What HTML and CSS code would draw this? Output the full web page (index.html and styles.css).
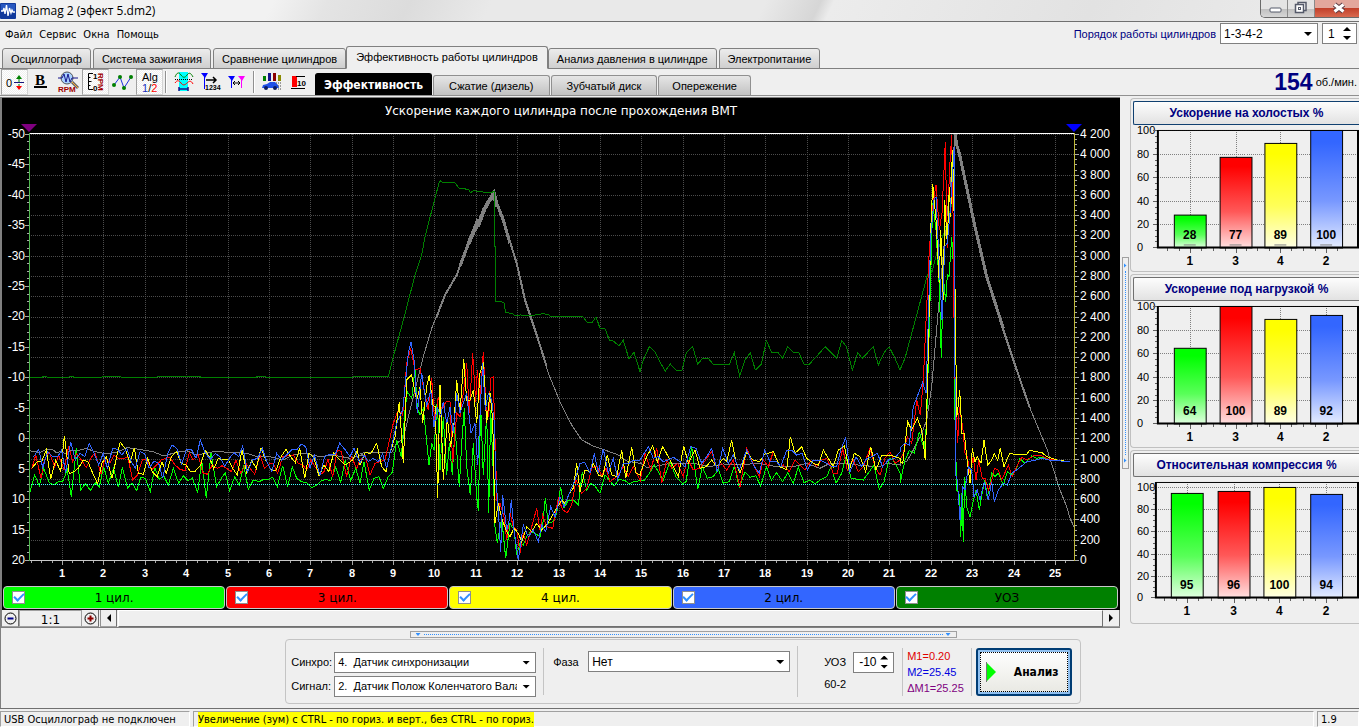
FILE: index.html
```html
<!DOCTYPE html>
<html lang="ru">
<head>
<meta charset="utf-8">
<title>Diamag 2</title>
<link rel="stylesheet" href="styles.css">
</head>
<body>
<header class="titlebar">
  <svg class="app-icon" viewBox="0 0 16 16" width="16" height="16"><rect width="16" height="16" rx="1" fill="#123a9c"/><rect x="1" y="1" width="14" height="7" fill="#2858c0"/><path d="M1 8h2l1-3 1 6 1.500-9 1.500 11 1.500-8 1.500 5 1-3 1 2h2" fill="none" stroke="#fff" stroke-width="1.300"/></svg>
  <h1 class="title">Diamag 2 (эфект 5.dm2)</h1>
  <div class="window-buttons">
    <button class="wbtn" aria-label="Свернуть"><svg viewBox="0 0 28 17" width="28" height="17"><rect x="9" y="8" width="11" height="4" rx="1" fill="#fff" stroke="#555a6a"/></svg></button>
    <button class="wbtn" aria-label="Развернуть"><svg viewBox="0 0 28 17" width="28" height="17"><path d="M10 5V2.500h8v8h-2.500" fill="#fff" stroke="#555a6a" stroke-width="1.500"/><rect x="7.500" y="4.500" width="8" height="8" fill="#fff" stroke="#555a6a" stroke-width="1.500"/><rect x="10.500" y="7.500" width="2" height="2" fill="none" stroke="#555a6a"/></svg></button>
    <button class="wbtn wbtn-close" aria-label="Закрыть"><svg viewBox="0 0 44 17" width="44" height="17"><path d="M19.500 4.500l9 7M28.500 4.500l-9 7" stroke="#5b3a42" stroke-width="5"/><path d="M19.500 4.500l9 7M28.500 4.500l-9 7" stroke="#fff" stroke-width="3"/></svg></button>
  </div>
</header>

<div class="top">
  <div class="top-left">
    <nav class="menu">
      <button>Файл</button><button>Сервис</button><button>Окна</button><button>Помощь</button>
    </nav>
    <nav class="tabs">
      <button class="tab">Осциллограф</button>
      <button class="tab">Система зажигания</button>
      <button class="tab">Сравнение цилиндров</button>
      <button class="tab tab-active">Эффективность работы цилиндров</button>
      <button class="tab">Анализ давления в цилиндре</button>
      <button class="tab">Электропитание</button>
    </nav>
  </div>
  <div class="order">
    <label for="order">Порядок работы цилиндров</label>
    <span class="select order-select"><select id="order"><option>1-3-4-2</option></select></span>
    <span class="spin order-spin"><input type="number" value="1" aria-label="Номер цилиндра"></span>
  </div>
</div>

<div class="toolbar">
  <button class="tool pressed" aria-label="Ноль"><svg viewBox="0 0 26 26" width="26" height="26"><text x="5" y="18" class="t11">0</text><path d="M13 13.500h10" stroke="#15157c"/><path d="M18 8v5M18 15v5" stroke="#008000"/><path d="M15 10l3-4 3 4z" fill="#008000"/><path d="M15 17l3 4 3-4z" fill="#f00"/></svg></button>
  <button class="tool" aria-label="Жирная линия"><svg viewBox="0 0 26 26" width="26" height="26"><text x="7" y="16" class="tb">B</text><path d="M6 18h13" stroke="#000" stroke-width="2"/></svg></button>
  <button class="tool" aria-label="Обороты"><svg viewBox="0 0 26 26" width="26" height="26"><circle cx="12" cy="9" r="6" fill="#a8d0ff" stroke="#555"/><path d="M3 9h4l2-4 2 8 2-8 2 8 2-4h6" fill="none" stroke="#15158c"/><path d="M17 13l6 6" stroke="#666" stroke-width="3"/><path d="M17 13l6 6" stroke="#ffa830"/><text x="3" y="23" class="t8 rpm">RPM</text></svg></button>
  <button class="tool pressed" aria-label="Шкала оборотов"><svg viewBox="0 0 26 26" width="26" height="26"><path d="M11 4.500H6.500v16H11" fill="none" stroke="#000"/><path d="M6.500 8.500h2M6.500 12.500h3M6.500 16.500h2" stroke="#000"/><text x="11" y="10" class="t8">1</text><text x="11" y="22" class="t8">0</text><text transform="translate(16 4) rotate(90)" class="t8 rpm">RPM</text></svg></button>
  <button class="tool" aria-label="Точки"><svg viewBox="0 0 26 26" width="26" height="26"><path d="M5 16l6-8 4 11 7-11" fill="none" stroke="#2030e0"/><g fill="#008000"><circle cx="5" cy="16" r="2"/><circle cx="11" cy="8" r="2"/><circle cx="15" cy="19" r="2"/><circle cx="22" cy="8" r="2"/></g></svg></button>
  <button class="tool pressed" aria-label="Алгоритм"><svg viewBox="0 0 26 26" width="26" height="26"><text x="6" y="12" class="t11">Alg</text><text x="6" y="23" class="t11"><tspan fill="#2030c0">1</tspan>/<tspan fill="#f00">2</tspan></text></svg></button>
  <span class="sep"></span>
  <button class="tool" aria-label="Диапазон"><svg viewBox="0 0 26 26" width="26" height="26"><rect x="9" y="3" width="9" height="19" fill="#0ff"/><path d="M5 8c2-5 4-5 6-2s4 3 6 0 4-2 6 2" fill="none" stroke="#008000"/><path d="M5 10.500h18" stroke="#000" stroke-dasharray="1 1"/><path d="M5 14c2-3 4-3 6 0s4 2 6 0 4-3 6 1" fill="none" stroke="#f00"/><path d="M9 20h9M9 18v4M18 18v4" stroke="#15158c" stroke-width="1.500"/></svg></button>
  <button class="tool" aria-label="Маркер счёта"><svg viewBox="0 0 26 26" width="26" height="26"><path d="M4 4h7l-3 5z" fill="#00f"/><path d="M7.500 5v15" stroke="#00f"/><path d="M9 11h10M16 8l3 3-3 3" fill="none" stroke="#000" stroke-width="1.500"/><text x="8" y="21" class="t7">1234</text></svg></button>
  <button class="tool" aria-label="Два маркера"><svg viewBox="0 0 26 26" width="26" height="26"><path d="M4 7h7l-3 5z" fill="#00f"/><path d="M7.500 8v11" stroke="#00f"/><path d="M14 7h7l-3 5z" fill="#f0f"/><path d="M17.500 8v11" stroke="#f0f"/><path d="M9 14h7M11 12l-2 2 2 2M14 12l2 2-2 2" fill="none" stroke="#000"/></svg></button>
  <span class="sep"></span>
  <button class="tool" aria-label="Автомобиль"><svg viewBox="0 0 26 26" width="26" height="26"><path d="M5 7h3v5H5z" fill="#008000"/><path d="M10 4h3v8h-3z" fill="#15158c"/><path d="M15 4h3v8h-3z" fill="#8b0000"/><path d="M20 6h3v6h-3z" fill="#8a8a00"/><path d="M4 19l1-3 4-1 3-2h5l3 3 1 3z" fill="#2050e8"/><circle cx="8" cy="19" r="2" fill="#0a1a60"/><circle cx="17" cy="19" r="2" fill="#0a1a60"/><path d="M18 14h6M20 17h4M20 20h4" stroke="#444" stroke-dasharray="1 1"/></svg></button>
  <button class="tool" aria-label="Порог 10"><svg viewBox="0 0 26 26" width="26" height="26"><path d="M7 7h5v11H7z" fill="#f00"/><path d="M11 7.500h9M6 19.500h14" stroke="#000"/><text x="12" y="17" class="t8">10</text></svg></button>
  <nav class="subtabs">
    <button class="subtab subtab-active">Эффективность</button>
    <button class="subtab">Сжатие (дизель)</button>
    <button class="subtab">Зубчатый диск</button>
    <button class="subtab">Опережение</button>
  </nav>
  <p class="rpm-readout"><strong>154</strong><span>об./мин.</span></p>
</div>

<main class="workspace">
  <section class="scope">
    <svg id="scope" class="scope-svg" viewBox="2 98 1118 487"></svg>
    <div class="legend">
      <label class="leg leg-green"><input type="checkbox" checked><span>1 цил.</span></label>
      <label class="leg leg-red"><input type="checkbox" checked><span>3 цил.</span></label>
      <label class="leg leg-yellow"><input type="checkbox" checked><span>4 цил.</span></label>
      <label class="leg leg-blue"><input type="checkbox" checked><span>2 цил.</span></label>
      <label class="leg leg-dark"><input type="checkbox" checked><span>УОЗ</span></label>
    </div>
    <div class="scrollrow">
      <button class="sbtn" aria-label="Уменьшить"><svg viewBox="0 0 13 13" width="13" height="13"><circle cx="6.500" cy="6.500" r="5.500" fill="none" stroke="#000"/><path d="M3.500 6.500h6" stroke="#00008b" stroke-width="2"/></svg></button>
      <output class="ratio">1:1</output>
      <button class="sbtn" aria-label="Увеличить"><svg viewBox="0 0 13 13" width="13" height="13"><circle cx="6.500" cy="6.500" r="5.500" fill="none" stroke="#000"/><path d="M3.500 6.500h6M6.500 3.500v6" stroke="#8b0000" stroke-width="2"/></svg></button>
      <button class="sbtn sleft" aria-label="Влево"><svg viewBox="0 0 6 8" width="6" height="8"><path d="M5 0v8L1 4z"/></svg></button>
      <div class="thumb"></div>
      <button class="sbtn" aria-label="Вправо"><svg viewBox="0 0 6 8" width="6" height="8"><path d="M1 0v8l4-4z"/></svg></button>
    </div>
  </section>
  <div class="vsplit"><button class="vgrip" aria-label="Свернуть панель"><i></i><b></b><i></i></button></div>
  <aside class="cards">
    <section class="card"><button class="card-head card-head-focus">Ускорение на холостых %</button><svg class="bars" viewBox="1132 125 227 145" data-left="1157" data-top="130" data-base="248" data-full="118" data-x="1173,1219,1264,1310" data-v="28,77,89,100" data-mark="1"></svg></section>
    <section class="card"><button class="card-head">Ускорение под нагрузкой %</button><svg class="bars" viewBox="1132 125 227 145" data-left="1157" data-top="130" data-base="248" data-full="118" data-x="1173,1219,1264,1310" data-v="64,100,89,92"></svg></section>
    <section class="card"><button class="card-head">Относительная компрессия %</button><svg class="bars" viewBox="1132 125 227 145" data-left="1155" data-top="130" data-base="246" data-full="111" data-x="1170,1217,1263,1310" data-v="95,96,100,94"></svg></section>
  </aside>
</main>

<section class="bottom">
  <button class="hgrip" aria-label="Свернуть настройки"><i></i><b></b><i></i></button>
  <div class="panel">
    <div class="pairs">
      <label for="sync">Синхро:</label>
      <span class="select"><select id="sync"><option>4.&nbsp; Датчик синхронизации</option></select></span>
      <label for="signal">Сигнал:</label>
      <span class="select"><select id="signal"><option>2.&nbsp; Датчик Полож Коленчатого Вала</option></select></span>
    </div>
    <div class="phase">
      <label for="phase">Фаза</label>
      <span class="select"><select id="phase"><option>Нет</option></select></span>
    </div>
    <div class="uoz">
      <label for="uoz">УОЗ</label>
      <span class="spin"><input id="uoz" type="number" value="-10"></span>
      <span>60-2</span>
    </div>
    <div class="marks">
      <span class="m1">М1=0.20</span><span class="m2">М2=25.45</span><span class="md">ΔМ1=25.25</span>
    </div>
    <button class="analyze"><svg viewBox="0 0 10 20" width="10" height="20"><path d="M0 0l10 10L0 20z" fill="#0f0"/><path d="M.500 0v20" stroke="#777"/></svg><span>Анализ</span></button>
  </div>
</section>

<footer class="status">
  <span class="st">USB Осциллограф не подключен</span>
  <span class="st st-main"><mark>Увеличение (зум) с CTRL - по гориз. и верт., без CTRL - по гориз.</mark></span>
  <span class="st">1.9</span>
</footer>
<script src="app.js"></script>
</body>
</html>
```
FILE: styles.css
```css
* { box-sizing: border-box; }
body {
  margin: 0;
  min-height: 100vh;
  display: flex;
  flex-direction: column;
  background: #efefef;
  color: #000;
  font: 11px/16px "Liberation Sans", Arial, sans-serif;
  overflow-x: hidden;
}
button, input, select { font: inherit; color: inherit; padding: 0; margin: 0; border: 0; background: none; border-radius: 0; }
h1, p { margin: 0; }
svg { display: block; }

.titlebar {
  height: 22px;
  display: flex;
  align-items: flex-start;
  border-bottom: 1px solid #707070;
  background: linear-gradient(115deg, #f2f2f2 0 20%, #e4e4e4 24%, #dcdcdc 30%, #e9e9e9 36%, #e9e9e9 56%, #d6d6d6 60%, #ececec 61%, #e2e2e2 80%, #ededed 100%);
}
.app-icon { margin: 3px 0 0; }
.title { flex: 1; margin: 3px 0 0 5px; font: 12px/16px "Open Sans", "Noto Sans", sans-serif; }
.window-buttons { display: flex; border: 1px solid #6a6a6a; border-top: 0; border-right: 0; border-radius: 0 0 0 5px; overflow: hidden; }
.wbtn { width: 27px; height: 17px; border-right: 1px solid #8a8a8a; background: linear-gradient(#e4e4e4 50%, #bfbfbf 51%, #d6d6d6); }
.wbtn-close { width: 44px; border-right: 0; background: linear-gradient(#e3a79c 45%, #c2412b 50%, #d9694f); }

.top { display: flex; justify-content: space-between; border-bottom: 1px solid #808080; }
.top-left { display: flex; flex-direction: column; }
.menu { display: flex; gap: 7px; padding: 5px 0 3px 5px; font: 11px/16px "DejaVu Sans Condensed", "DejaVu Sans", sans-serif; }
.tabs { display: flex; align-items: flex-end; gap: 2px; padding-left: 2px; margin-bottom: -1px; height: 23px; }
.tab {
  height: 21px;
  padding: 0 8px;
  white-space: nowrap;
  border: 1px solid #808080;
  border-radius: 3px 3px 0 0;
  background: linear-gradient(#ececec, #cfcfcf);
}
.tab-active { height: 23px; margin: 0 -2px; padding: 0 9px 2px; background: #efefef; border-bottom-color: #efefef; }
.order { display: flex; align-items: center; gap: 4px; padding: 1px 2px 0 0; height: 22px; color: #000080; }
.order .select, .order .spin { color: #000; }
.order-select { width: 98px; }
.order-spin { width: 35px; }

.select, .spin { position: relative; display: block; height: 21px; background: #fff; border: 1px solid #808080; }
.select select { appearance: none; width: 100%; height: 19px; padding: 0 18px 0 3px; outline: 0; }
.select::after { content: ""; position: absolute; right: 5px; top: 8px; width: 8px; height: 4px; background: #000; clip-path: polygon(0 0, 100% 0, 50% 100%); pointer-events: none; }
.spin input { appearance: textfield; width: 100%; height: 19px; padding: 0 16px 0 5px; outline: 0; }
.spin input::-webkit-inner-spin-button { appearance: none; }
.spin::before, .spin::after { content: ""; position: absolute; right: 5px; width: 8px; height: 4px; background: #000; }
.spin::before { top: 3px; clip-path: polygon(50% 0, 100% 100%, 0 100%); }
.spin::after { bottom: 3px; clip-path: polygon(0 0, 100% 0, 50% 100%); }
.order select, .order input { font-size: 12px; }

.toolbar { display: flex; height: 27px; padding-left: 1px; border-bottom: 1px solid #909090; }
.tool { width: 27px; height: 26px; }
.tool.pressed { border: 1px solid #d4d4d4; border-top-color: #a0a0a0; border-left-color: #a0a0a0; background: repeating-conic-gradient(#fff 0 25%, #efefef 0 50%) 0 0 / 2px 2px; }
.tool.pressed svg { margin: -1px; }
.sep { width: 2px; margin: 2px 3px 2px 2px; border-left: 1px solid #909090; border-right: 1px solid #fff; }
.t11 { font: 11px "Liberation Sans", sans-serif; }
.tb { font: bold 15px "Liberation Serif", serif; }
.t8 { font: bold 8px "Liberation Sans", sans-serif; }
.t7 { font: bold 7px "Liberation Sans", sans-serif; }
.rpm { fill: #a00000; }
.subtabs { display: flex; align-items: flex-end; gap: 1px; margin-left: 3px; }
.subtab { height: 20px; padding: 0 15px; border: 1px solid #909090; border-bottom: 0; border-radius: 3px 3px 0 0; background: linear-gradient(#e6e6e6, #c2c2c2); white-space: nowrap; }
.subtab:last-child { padding: 0 13px; }
.subtab-active { height: 22px; padding: 0 8px; background: #000; border-color: #000; color: #fff; font: bold 12px/16px "DejaVu Sans Condensed", "DejaVu Sans", sans-serif; }
.rpm-readout { flex: 1; display: flex; justify-content: flex-end; align-items: center; gap: 3px; padding-right: 2px; }
.rpm-readout strong { font-size: 23px; line-height: 26px; color: #000080; }

.workspace { display: grid; grid-template-columns: minmax(0, 1fr) 10px 229px; margin-top: 2px; }
.scope { border-left: 2px solid #808080; background: #000; border-top: 1px solid #808080; margin-top: -1px; }
.scope-svg { width: 100%; height: auto; background: #000; font: 12px "Liberation Sans", sans-serif; fill: #fff; }
.scope-title { font: 12px "DejaVu Sans", sans-serif; }
.scope-time { font-weight: bold; font-size: 11px; }
.legend { display: grid; grid-template-columns: repeat(5, 1fr); gap: 1px; padding: 1px 2px 1px 1px; }
.leg { display: grid; grid-template-columns: 13px 1fr 13px; align-items: center; height: 23px; padding: 0 8px; border: 1px solid #c8c8c8; border-radius: 4px; text-align: center; font: 12px/20px "DejaVu Sans", sans-serif; }
.leg-green { background: #0f0; }
.leg-red { background: #f00; }
.leg-yellow { background: #ff0; }
.leg-blue { background: #36f; }
.leg-dark { background: #008000; }
.leg input { appearance: none; width: 13px; height: 13px; background: #fff; border: 1px solid #909090; display: grid; place-items: center; }
.leg input:checked::before { content: ""; width: 8px; height: 4px; border: solid #3090ff; border-width: 0 0 2px 2px; transform: rotate(-45deg); margin-bottom: 3px; }

.scrollrow { display: flex; height: 18px; background: #efefef; border-bottom: 1px solid #808080; }
.sbtn { width: 17px; display: grid; place-items: center; border-right: 1px solid #707070; border-bottom: 1px solid #a0a0a0; background: #efefef; }
.sleft { margin-left: 1px; border-left: 1px solid #909090; }
.ratio { width: 63px; border: 1px solid #a0a0a0; text-align: center; font: 12px/18px "DejaVu Sans", sans-serif; }
.thumb { flex: 1; border: 1px solid #fff; border-bottom-color: #707070; border-right-color: #707070; margin-left: 1px; }

.vsplit { display: flex; align-items: center; justify-content: center; }
.vgrip, .hgrip { display: flex; align-items: center; justify-content: space-between; border: 1px solid #a0a0a0; }
.vgrip { flex-direction: column; width: 7px; height: 212px; padding: 5px 0; }
.vgrip i { width: 3px; height: 5px; background: #3090ff; clip-path: polygon(0 0, 100% 50%, 0 100%); }
.vgrip b { flex: 1; margin: 3px 0; border-left: 1px dotted #3090ff; }
.hgrip { width: 547px; height: 7px; padding: 0 5px; margin-left: 6px; }
.hgrip i { width: 5px; height: 3px; background: #3090ff; clip-path: polygon(0 0, 100% 0, 50% 100%); }
.hgrip b { flex: 1; margin: 0 3px; border-top: 1px dotted #3090ff; }

.cards { display: flex; flex-direction: column; gap: 2px; }
.card { display: flex; flex-direction: column; border: 1px solid #c0c0c0; border-right: 0; border-radius: 4px 0 0 4px; padding: 2px 0 0 2px; height: 174px; }
.card-head { height: 24px; border: 1px solid #707070; border-right: 0; border-radius: 2px 0 0 2px; background: linear-gradient(#fdfdfd, #e2e2e2); color: #000080; font-weight: bold; font-size: 12px; white-space: nowrap; }
.card-head-focus { border-color: #104070; }
.bars { width: 100%; height: auto; font: 11px "Liberation Sans", sans-serif; }
.bars .val, .bars .cat { font-weight: bold; font-size: 12px; }

.bottom { display: flex; flex-direction: column; align-items: center; gap: 1px; padding: 3px 0 4px; border-left: 1px solid #808080; }
.panel { display: flex; align-items: center; height: 65px; border: 1px solid #c4c4c4; border-radius: 4px; padding: 0 8px 0 5px; margin-left: 6px; }
.pairs { display: grid; grid-template-columns: 40px 202px; gap: 3px; align-items: center; padding-right: 7px; margin-top: 5px; }
.phase { display: grid; grid-template-columns: 32px 202px; gap: 3px; align-items: center; align-self: stretch; align-content: center; padding: 0 7px 20px 9px; border-left: 1px solid #c4c4c4; margin: 8px 0; }
.uoz { display: grid; grid-template-columns: 26px 41px; gap: 3px; align-items: center; align-content: center; padding: 0 8px 0 26px; border-left: 1px solid #c4c4c4; align-self: stretch; margin: 6px 0; }
.phase select, .uoz input { font-size: 12px; }
.marks { display: flex; flex-direction: column; padding: 0 7px 0 4px; border-left: 1px solid #c4c4c4; border-right: 1px solid #c4c4c4; margin-right: 4px; }
.m1 { color: #e00000; }
.m2 { color: #0000e0; }
.md { color: #800080; }
.analyze { display: flex; align-items: center; gap: 18px; width: 96px; height: 48px; padding: 0 8px; border: 2px solid #003c74; border-radius: 3px; outline: 1px dotted #000; outline-offset: -5px; background: linear-gradient(#fff, #e8e8e2); box-shadow: inset 0 0 0 2px #90c0f0; font: bold 12px/16px "DejaVu Sans Condensed", "DejaVu Sans", sans-serif; }

.status { display: flex; gap: 3px; margin-top: auto; height: 19px; border-top: 1px solid #707070; padding-top: 2px; font: 11px/16px "DejaVu Sans Condensed", "DejaVu Sans", sans-serif; }
.st { border: 1px solid; border-color: #a0a0a0 #fff #fff #a0a0a0; padding: 0 3px; min-width: 42px; white-space: nowrap; }
.st:first-child { width: 190px; }
.st-main { flex: 1; padding-left: 4px; }
mark { display: inline-block; background: #ff0; color: #000; }
```
FILE: app.js
```js
const NS = 'http://www.w3.org/2000/svg';
function add(parent, tag, attrs, text) {
  const el = document.createElementNS(NS, tag);
  for (const k in attrs) el.setAttribute(k, attrs[k]);
  if (text !== undefined) el.textContent = text;
  parent.appendChild(el);
  return el;
}
const group = n => String(n).replace(/(\d)(\d{3})$/, '$1 $2');

/* Traces are stored as blocks of samples in thirds of a pixel; each block has its own origin. */
const origin = { a: [0, 360], b: [1080, 480], c: [1800, 900], d: [2580, 360] };
const series = [
  { color: '#808080', a: '90,992 100,995 120,997 140,988 160,990 170,999 180,995 200,1002 210,990 240,990 260,985 280,994 310,1000 330,1000 350,997 380,983 400,985 430,990 460,995 490,1008 530,997 560,992 590,1005 640,995 700,997 740,1000 770,1010 800,1008 850,1020 880,1005 910,1000 960,1010 1000,1005 1050,1015 1090,1005', b: '0,880 30,877 95,878 110,850 130,835 150,750 180,630 190,590 215,505 235,455 240,448 255,405 290,345 310,290 335,225 360,180 385,125 402,97 410,130 430,180 470,310 495,420 530,525 565,640 600,725 635,795 665,840 700,858 740,872 775,885 800,903 840,910', c: '120,487 140,502 160,500 200,492 240,490 290,492 330,500 370,492 420,495 470,490 530,500 580,500 620,490 660,505 690,490 740,490 790,497 840,500 860,490 900,495', d: '120,1030 140,1025 160,990 185,940 200,900 215,800 235,570 250,400 270,200 286,42 310,150 345,320 380,470 420,600 465,735 510,865 560,985 600,1110 620,1160 630,1195 642,1220' },
  { color: '#808080', w: 2, b: '228,475 255,405 290,345 310,290 335,225 360,180 385,125 402,97 410,130 430,180 470,310 495,420 530,525 560,620' },
  { color: '#808080', w: 3, b: '300,318 310,292 335,225 345,212 360,180 385,125 402,97 410,130 430,180 450,250' },
  { color: '#808080', w: 4, b: '325,252 345,205 352,185 357,190 372,150 385,125 402,105 412,140' },
  { color: '#808080', w: 3, d: '286,42 290,75 298,100 310,155 345,320 380,470 430,625' },
  { color: '#808080', w: 2, d: '420,600 465,735 510,865' },
  { color: '#008000', a: '90,772 126,772 128,770 140,770 142,772 206,772 208,770 220,770 222,772 305,772 307,770 362,770 364,772 470,772 472,770 600,770 602,772 768,772 770,770 797,770 799,772 1058,772 1060,770', b: '0,651 85,650 100,590 133,470 165,345 185,285 195,230 238,65 240,62 245,66 283,66 297,85 325,88 332,98 340,92 385,98 403,95 403,260 406,260 406,425 420,423 432,428 437,458 455,460 467,468 480,465 520,466 550,461 565,464 575,471 668,470 682,487 697,487 708,470 720,505 736,507 748,540 760,543 777,558 790,541 807,597 822,577 840,635', c: '120,213 130,180 148,140 165,155 180,187 196,213 211,192 228,210 246,210 259,158 278,140 293,192 308,175 325,175 340,193 388,193 403,158 419,229 435,180 451,158 466,210 484,193 499,122 515,157 533,157 548,175 563,140 580,157 596,157 612,193 628,193 676,140 710,175 725,122 739,139 757,211 773,158 787,175 820,140 835,195 852,158 867,140 885,175 898,205', d: '120,750 135,715 203,462 215,458 230,400 262,310 280,230' },
  { color: '#00ff00', a: '90,1115 104,1065 118,1097 131,1045 148,1088 162,1094 175,1085 188,1084 202,1050 214,1130 229,985 242,1110 257,1090 271,1112 285,1088 298,1100 311,1040 325,1090 341,1045 355,1102 367,1042 383,1105 396,1088 410,1112 422,1072 436,1075 451,1115 464,1042 478,1078 491,1068 505,1095 520,1045 536,1090 550,1068 564,1082 577,1074 593,1118 605,1020 619,1135 633,1000 650,1100 664,1075 676,1058 689,1112 704,1070 718,1095 731,1035 745,1108 760,1080 777,1085 792,1078 808,1077 818,1072 832,1100 848,1037 863,1100 877,1040 890,1075 904,1085 920,1088 936,1103 950,1095 964,1083 978,1078 992,1083 1007,1040 1022,1088 1036,1020 1052,1082 1067,1045', b: '0,970 12,905 28,990 42,955 57,950 70,985 85,950 97,937 110,840 124,890 135,750 142,695 155,715 165,630 172,745 180,765 190,745 207,915 215,850 222,870 232,720 240,930 250,770 260,945 268,850 277,945 285,800 298,980 305,850 313,745 320,920 331,1005 340,850 350,1010 355,1052 362,740 370,945 380,760 386,1060 392,750 400,940 405,1100 412,1150 425,1075 437,1195 450,1090 462,1110 470,1185 480,1150 490,1155 500,1130 512,1115 525,1120 540,1130 548,1095 556,1015 565,1090 580,1085 590,1060 602,980 612,1045 625,1020 640,1020 655,1035 667,935 680,990 692,970 705,978 720,1000 735,945 750,962 762,978 778,958 795,962 808,972 822,965 840,962', c: '120,540 132,542 148,520 163,495 178,520 190,540 210,485 228,530 248,552 258,545 275,440 293,568 307,500 322,535 340,530 355,508 370,550 388,545 403,498 418,562 435,515 450,532 467,527 482,558 499,500 514,540 530,518 548,545 563,518 580,550 595,502 612,548 630,540 645,552 660,540 680,530 693,500 708,550 725,520 738,470 753,535 790,540 808,515 822,495 838,568 852,545 868,475 880,480 900,520', d: '120,1090 135,1020 148,992 163,1000 178,935 193,990 200,900 208,620 218,250 228,330 238,500 244,715 250,470 257,545 262,465 267,470 275,350 283,480 285,900 290,1110 297,1120 302,1250 306,1120 310,1265 314,1070 320,1160 330,1190 338,1150 348,1110 358,1170 368,1110 375,1080 382,1135 395,1060 405,1070 415,1060 430,1095 442,1055 455,1065 470,1045 480,1015 495,1030 515,1008 530,1015 545,1012 560,1018 580,1020 610,1024' },
  { color: '#ff0000', a: '95,1048 107,1005 123,1075 133,1020 147,995 164,1040 176,1005 192,1050 206,978 218,1025 230,1000 244,1020 259,1043 272,1015 285,998 303,1062 315,1015 330,1030 342,1005 355,1015 370,1017 383,1010 398,1080 412,1065 428,1018 442,1020 455,1050 470,1035 484,1020 497,1015 510,1012 525,1035 540,1048 555,1052 568,998 580,1020 595,1005 608,1058 622,1063 637,1035 652,1045 666,1037 680,1045 694,1055 708,1020 722,1060 737,1030 750,1045 764,1062 780,1005 793,1045 808,1032 820,1030 833,1060 848,1010 862,1008 880,1005 895,1030 908,1035 920,1050 932,1020 948,1045 960,1065 972,1055 984,1018 998,1070 1012,990 1024,995 1040,1070 1054,1010 1070,1045', b: '0,900 15,885 30,945 45,910 60,905 75,900 100,790 115,750 128,765 140,610 152,565 165,630 180,625 192,690 205,750 215,655 225,800 235,710 245,750 258,725 270,725 278,910 290,760 300,770 310,700 320,610 328,760 338,580 347,725 352,630 360,720 370,577 378,740 386,770 392,655 400,650 406,870 412,1050 420,1030 432,1070 440,1140 450,1060 460,1100 470,1110 480,1180 490,1120 500,1155 515,1100 530,1045 540,1110 548,1065 560,1100 578,1105 595,1015 608,1050 622,1058 635,1035 648,960 665,1000 680,985 695,925 710,918 725,945 738,925 750,965 770,950 790,920 805,948 820,920 840,960', c: '120,545 135,460 152,510 170,445 185,550 200,480 215,505 233,490 250,530 262,475 280,510 300,505 320,475 335,455 350,505 365,490 380,510 400,480 420,560 440,445 455,480 478,530 490,480 505,500 520,455 540,500 550,495 568,515 585,480 600,495 615,510 632,482 650,500 665,480 680,475 700,520 712,520 728,445 742,510 760,480 775,515 790,500 810,445 825,500 840,525 855,475 870,455 885,490 900,480', d: '120,1020 130,1000 142,950 155,970 170,840 181,885 190,780 200,560 208,390 218,260 228,195 238,330 246,280 256,65 262,385 268,160 275,45 280,330 283,700 287,850 293,970 298,860 308,920 315,1000 322,1010 330,1060 340,1010 348,1080 356,1020 367,1075 375,1075 385,1110 395,1080 403,1045 415,1050 425,1080 445,1035 457,1070 470,1040 485,1012 500,1020 525,1005 545,1008 565,1018 600,1022' },
  { color: '#ffff00', a: '97,1043 112,1025 125,1025 139,990 152,1077 167,1020 182,1055 193,948 208,1062 222,1055 236,1043 250,1020 264,1025 278,1060 293,1092 305,1030 319,1010 336,1075 350,1010 361,967 375,985 390,1028 403,983 415,1060 430,1063 443,1015 457,1055 472,1070 486,1025 499,1060 514,1010 530,995 544,1030 558,1035 570,1053 586,1053 602,1035 615,990 628,1010 641,1047 655,1015 670,1020 684,1018 698,1045 712,1065 726,990 740,1057 755,1022 769,1045 783,985 797,1020 815,1052 829,1050 843,1010 858,988 872,1010 886,1028 899,985 914,1075 927,1000 942,1015 957,1068 972,1035 986,1055 1001,1000 1015,1015 1036,1035 1058,1020 1072,990', b: '0,915 15,878 33,880 50,850 65,920 78,935 90,880 105,830 118,725 130,910 140,660 155,645 170,720 180,680 188,790 200,680 208,645 218,735 226,740 233,1015 240,675 250,960 262,775 272,860 282,790 290,660 300,760 311,597 320,720 330,720 340,690 350,790 360,640 370,605 380,790 390,700 398,780 405,1090 415,1030 425,1075 440,1115 450,1130 462,1105 475,1120 485,1145 500,1100 515,1115 530,1090 545,1110 560,1095 575,1070 590,1045 605,1020 615,1030 628,1000 640,985 650,910 660,995 675,930 690,935 700,910 715,945 728,950 742,885 755,945 770,950 785,870 797,955 815,862 828,940 840,945', c: '120,522 140,470 158,437 172,485 188,440 205,470 220,500 235,530 251,437 265,490 285,450 300,505 318,500 335,480 350,500 370,475 380,485 395,420 408,485 420,520 440,455 458,480 478,485 495,462 520,455 540,500 560,510 571,410 585,460 605,440 620,475 640,490 655,495 670,450 685,475 700,500 715,450 733,437 748,510 763,460 780,470 797,515 812,440 828,510 845,465 870,465 900,475', d: '120,1025 128,1030 143,905 155,930 172,895 185,930 196,1020 205,700 212,330 218,192 228,300 238,490 242,330 250,540 254,240 262,370 268,200 272,290 277,90 281,200 285,500 290,890 293,870 299,810 306,940 313,940 320,1010 330,1090 337,985 345,1025 352,1010 363,1030 372,960 383,1035 395,1020 403,1000 413,1020 421,985 432,1040 440,1020 450,1000 470,1005 500,1003 510,990 525,995 545,997 560,1010 590,1020 612,1022' },
  { color: '#3366ff', a: '101,1010 116,988 128,1043 143,995 158,1010 173,1010 185,990 197,1060 212,965 226,1020 240,1000 254,1010 268,970 282,1000 296,1035 310,1000 322,1045 338,985 352,988 366,1005 380,985 394,1025 406,1045 420,995 434,1002 447,1045 462,1023 476,1030 488,1075 503,1000 517,975 530,985 545,1032 560,988 575,990 588,1015 601,960 616,1000 632,1018 646,1000 660,1010 674,1040 688,1015 702,998 716,1010 728,978 742,1057 757,1020 773,1015 787,985 800,1025 815,1055 830,1000 845,1020 860,1005 877,988 890,990 903,972 917,980 930,1045 943,1005 960,1065 974,1010 988,1003 1005,1005 1019,970 1036,990 1050,1010 1062,985', b: '0,910 12,885 25,905 40,895 55,905 68,882 80,925 92,870 110,790 128,750 145,580 153,547 162,600 172,760 185,640 200,740 212,690 222,800 232,740 242,770 250,725 260,790 270,740 280,820 290,700 300,760 310,730 320,700 333,820 345,790 353,915 362,720 368,610 376,750 385,700 395,720 402,780 408,960 415,1050 422,1175 428,1005 440,1110 448,1080 454,1020 462,1110 475,1200 490,1095 505,1130 520,1110 535,1145 545,1095 557,1115 572,1040 585,1070 600,1010 612,1040 628,1000 645,960 660,910 675,908 690,940 703,880 715,940 730,867 745,940 760,895 773,958 790,910 805,912 820,900 840,900', c: '120,480 145,440 160,475 175,470 190,485 205,480 220,472 240,485 255,500 272,440 288,445 305,490 320,470 335,445 352,515 368,445 385,490 400,465 418,510 440,450 460,495 478,520 494,450 510,485 530,485 542,500 560,450 575,450 590,465 607,460 622,510 640,480 660,480 680,490 695,500 710,500 722,450 737,412 750,515 768,470 785,500 800,475 815,470 832,460 848,500 865,480 885,475 900,455', d: '120,985 135,970 148,975 160,860 188,787 198,820 205,600 212,350 222,240 228,230 236,400 246,600 254,380 262,370 270,280 283,80 286,1060 292,1080 300,1200 308,1100 315,1110 325,1040 335,1050 342,1130 352,1110 360,1140 373,1085 385,1140 395,1085 403,1145 415,1110 430,1090 442,1095 455,1060 470,1050 500,1025 520,1022 545,1015 575,1022 630,1024' }
];

function drawScope(svg) {
  const L = 29, R = 1074, T = 134, B = 560;
  const px = n => Math.round(n) + 0.5;
  const xOf = t => 20.7 + 41.37 * t;
  const yL = v => 438.2 + 6.09 * v;
  const yR = v => 560 - 426 * v / 4200;
  const crisp = { 'shape-rendering': 'crispEdges', fill: 'none' };
  add(svg, 'text', { class: 'scope-title', x: 561, y: 115, 'text-anchor': 'middle' }, 'Ускорение каждого цилиндра после прохождения ВМТ');
  let grid = '', minor = '';
  for (let v = 0; v <= 4200; v += 200) {
    grid += `M${L} ${px(yR(v))}H${R}`;
    minor += `M${R} ${px(yR(v))}h5`;
    for (let k = 1; k < 4 && v < 4200; k++) minor += `M${R} ${px(yR(v + 50 * k))}h3`;
    add(svg, 'text', { x: 1080, y: Math.round(yR(v)) + 4 }, group(v));
  }
  for (let t = 1; t <= 25; t++) {
    grid += `M${px(xOf(t))} ${T}V${B}`;
    minor += `M${px(xOf(t))} ${B}v5`;
    add(svg, 'text', { class: 'scope-time', x: Math.round(xOf(t)), y: 577, 'text-anchor': 'middle' }, t);
  }
  for (let t = 0.25; t < 25.45; t += 0.25) minor += `M${px(xOf(t))} ${B}v3`;
  for (let v = -50; v <= 20; v += 5) {
    minor += `M${L} ${px(yL(v))}h-4`;
    for (let k = 1; k < 4 && v < 20; k++) minor += `M${L} ${px(yL(v + 1.25 * k))}h-2`;
    add(svg, 'text', { x: 25, y: Math.round(yL(v)) + 4, 'text-anchor': 'end' }, v);
  }
  add(svg, 'path', { ...crisp, d: grid, stroke: '#4c4c4c', 'stroke-dasharray': '1 1' });
  add(svg, 'path', { ...crisp, d: minor, stroke: '#a8a8a8' });
  for (const s of series) for (const key in origin) {
    if (!s[key]) continue;
    /* blocks are joined to the next one by repeating its first sample */
    const pts = s[key].split(' ').map(p => p.split(',').map((n, i) => (+n + origin[key][i]) / 3));
    const next = { a: 'b', b: 'c', c: 'd' }[key];
    if (next && s[next]) pts.push(s[next].split(' ')[0].split(',').map((n, i) => (+n + origin[next][i]) / 3));
    add(svg, 'polyline', { ...crisp, points: pts.map(p => p.map(n => n.toFixed(1)).join()).join(' '), stroke: s.color, 'stroke-width': s.w || 1 });
  }
  add(svg, 'path', { ...crisp, d: `M${L} 484.5H${R}`, stroke: '#40ffff', 'stroke-dasharray': '1 1' });
  add(svg, 'path', { ...crisp, d: `M${L} 133.5H${R}`, stroke: '#fff' });
  add(svg, 'path', { ...crisp, d: `M${L} 560.5H${R}`, stroke: '#c8c8c8' });
  add(svg, 'path', { ...crisp, d: `M${L}.5 133V561`, stroke: '#50b850' });
  add(svg, 'path', { ...crisp, d: `M${R}.5 133V561`, stroke: '#c0b838' });
  add(svg, 'path', { d: 'M21 124h16l-8 8z', fill: '#800080' });
  add(svg, 'path', { d: 'M1066 124h16l-8 8z', fill: '#0000ff' });
}

function drawBars(svg, idx) {
  const d = svg.dataset, L = +d.left, T = +d.top, B = +d.base, F = +d.full;
  const colors = [['#00ff00', '#58ff58', '#e0ffe0'], ['#ff0000', '#ff5858', '#ffe0e0'], ['#ffff00', '#ffff58', '#ffffe4'], ['#3366ff', '#7898ff', '#e4ecff']];
  const xs = d.x.split(',').map(Number), vs = d.v.split(',').map(Number);
  const names = ['1', '3', '4', '2'];
  const defs = add(svg, 'defs', {});
  let grid = '', ticks = '';
  for (let v = 0; v <= 100; v += 20) {
    const y = Math.round(B - F * v / 100) + 0.5;
    grid += `M${L} ${y}H1358`;
    ticks += `M${L} ${y}h-5`;
    for (let k = 5; k < 20 && v < 100; k += 5) ticks += `M${L} ${Math.round(B - F * (v + k) / 100) + 0.5}h-3`;
    add(svg, 'text', { x: 1136, y: y + 3.5 }, v);
  }
  xs.forEach(x => {
    grid += `M${x + 16.5} ${T}V${B}`;
    ticks += `M${x + 16.5} ${B}v6`;
    for (const k of [-23, -11, 11]) ticks += `M${x + 16.5 + k} ${B}v4`;
  });
  add(svg, 'path', { d: grid, stroke: '#808080', 'stroke-dasharray': '1 1', fill: 'none', 'shape-rendering': 'crispEdges' });
  add(svg, 'path', { d: ticks, stroke: '#606060', fill: 'none', 'shape-rendering': 'crispEdges' });
  xs.forEach((x, i) => {
    const id = `fill-${idx}-${i}`;
    const lg = add(defs, 'linearGradient', { id, x1: 0, y1: 0, x2: 0, y2: 1 });
    [0.1, 0.6, 1].forEach((offset, k) => add(lg, 'stop', { offset, 'stop-color': colors[i][k] }));
    const h = Math.round(F * vs[i] / 100);
    add(svg, 'rect', { x: x + 0.5, y: B - h + 0.5, width: 32, height: h, fill: `url(#${id})`, stroke: '#000' });
    if (d.mark) add(svg, 'path', { d: `M${x + 10} ${B - 2.5}h12`, stroke: '#808080' });
    add(svg, 'text', { class: 'val', x: x + 16, y: B - 8, 'text-anchor': 'middle' }, vs[i]);
    add(svg, 'text', { class: 'cat', x: x + 16, y: B + 18, 'text-anchor': 'middle' }, names[i]);
  });
  add(svg, 'path', { d: `M${L} ${T + 0.5}H1359`, stroke: '#000', fill: 'none' });
  add(svg, 'path', { d: `M${L} ${T}V${B}H1358V${T}`, stroke: '#000', 'stroke-width': 2, fill: 'none' });
}

drawScope(document.getElementById('scope'));
document.querySelectorAll('.bars').forEach(drawBars);
```
